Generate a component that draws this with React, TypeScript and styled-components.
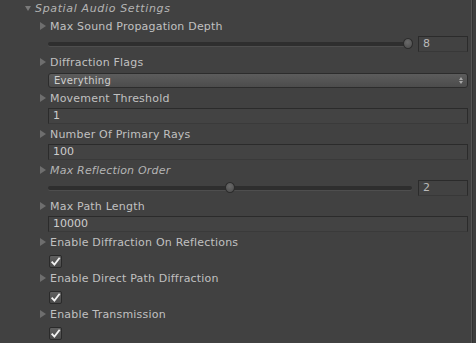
import styled, { createGlobalStyle } from 'styled-components';

const GlobalStyle = createGlobalStyle`
  html, body {
    margin: 0;
    padding: 0;
    background: #414141;
  }
  body {
    font-family: "DejaVu Sans", "Liberation Sans", sans-serif;
    font-size: 11px;
    color: #c2c2c2;
  }
`;

const Window = styled.div`
  display: flex;
  width: 476px;
  height: 343px;
  overflow: hidden;
  background: #414141;
`;

const Inspector = styled.div`
  width: 471px;
  display: flex;
  flex-direction: column;
  margin-top: -1px;
`;

const ScrollEdge = styled.div`
  flex: 1;
  border-left: 1px solid #555555;
  background: #3f3f3f;
  box-shadow: inset 1px 0 0 #333333;
`;

const Row = styled.div<{ $indent: number }>`
  height: 18px;
  display: flex;
  align-items: center;
  padding-left: ${(p) => p.$indent}px;
  padding-right: 3px;
  flex-shrink: 0;
`;

const DownArrow = styled.span`
  width: 0;
  height: 0;
  border-left: 3px solid transparent;
  border-right: 3px solid transparent;
  border-top: 5px solid #7a7a7a;
  margin-right: 4px;
  margin-top: 1px;
`;

const RightArrow = styled.span`
  width: 0;
  height: 0;
  border-top: 4.5px solid transparent;
  border-bottom: 4.5px solid transparent;
  border-left: 6px solid #6e6e6e;
  margin-right: 4px;
`;

const Label = styled.span<{ $italic?: boolean; $spacing?: number }>`
  font-style: ${(p) => (p.$italic ? 'italic' : 'normal')};
  color: ${(p) => (p.$italic ? '#b4b4b4' : '#c0c0c0')};
  letter-spacing: ${(p) => p.$spacing ?? 0.2}px;
  white-space: nowrap;
`;

const SliderWrap = styled.div`
  flex: 1;
  display: flex;
  align-items: center;
`;

const Track = styled.div`
  position: relative;
  flex: 1;
  height: 4px;
  border-radius: 2px;
  background: #2e2e2e;
  box-shadow: 0 1px 0 #4e4e4e;
`;

const Knob = styled.div`
  position: absolute;
  top: -4px;
  width: 10px;
  height: 11px;
  border-radius: 50%;
  background: radial-gradient(circle at 45% 35%, #6a6a6a, #535353 70%);
  border: 1px solid #2c2c2c;
  box-sizing: border-box;
`;

const NumberField = styled.div`
  width: 50px;
  height: 16px;
  margin-left: 6px;
  box-sizing: border-box;
  border: 1px solid #2b2b2b;
  border-bottom-color: #383838;
  background: #424242;
  padding-left: 4px;
  line-height: 14px;
  color: #b9b9b9;
`;

const TextField = styled.div`
  flex: 1;
  height: 16px;
  box-sizing: border-box;
  border: 1px solid #2b2b2b;
  border-bottom-color: #3a3a3a;
  background: #434343;
  padding-left: 4px;
  line-height: 14px;
  color: #cdcdcd;
`;

const Dropdown = styled.div`
  flex: 1;
  height: 15px;
  box-sizing: border-box;
  display: flex;
  align-items: center;
  justify-content: space-between;
  padding: 0 4px 0 5px;
  border: 1px solid #2c2c2c;
  border-radius: 3px;
  background: linear-gradient(#5c5c5c, #4c4c4c);
  font-size: 10px;
  color: #cfcfcf;
  letter-spacing: 0.3px;
`;

const Spinner = styled.span`
  display: flex;
  flex-direction: column;
  gap: 1px;

  &::before,
  &::after {
    content: '';
    width: 0;
    height: 0;
    border-left: 2px solid transparent;
    border-right: 2px solid transparent;
  }
  &::before {
    border-bottom: 3px solid #a8a8a8;
  }
  &::after {
    border-top: 3px solid #a8a8a8;
  }
`;

const CheckBox = styled.div`
  width: 13px;
  height: 13px;
  margin-left: 1px;
  margin-top: 2px;
  box-sizing: border-box;
  border: 1px solid #2a2a2a;
  border-radius: 2px;
  background: linear-gradient(#606060, #4a4a4a);
  display: flex;
  align-items: center;
  justify-content: center;
`;

const Check = () => (
  <svg width="11" height="11" viewBox="0 0 10 10">
    <path d="M1.5 5.2 L4 7.8 L8.8 1.6" fill="none" stroke="#f2f2f2" strokeWidth="1.7" />
  </svg>
);

const Prop = ({ label, italic }: { label: string; italic?: boolean }) => (
  <Row $indent={40}>
    <RightArrow />
    <Label $italic={italic}>{label}</Label>
  </Row>
);

const Slider = ({ pos, value }: { pos: number; value: string }) => (
  <Row $indent={48}>
    <SliderWrap>
      <Track>
        <Knob style={{ left: `calc(${pos * 100}% - ${pos * 8}px - 1px)` }} />
      </Track>
    </SliderWrap>
    <NumberField>{value}</NumberField>
  </Row>
);

const Field = ({ value }: { value: string }) => (
  <Row $indent={48}>
    <TextField>{value}</TextField>
  </Row>
);

const Toggle = () => (
  <Row $indent={48}>
    <CheckBox>
      <Check />
    </CheckBox>
  </Row>
);

export default function App() {
  return (
    <>
      <GlobalStyle />
      <Window>
        <Inspector>
          <Row $indent={25}>
            <DownArrow />
            <Label $italic $spacing={0.65}>
              Spatial Audio Settings
            </Label>
          </Row>
          <Prop label="Max Sound Propagation Depth" />
          <Slider pos={1} value="8" />
          <Prop label="Diffraction Flags" />
          <Row $indent={48}>
            <Dropdown>
              <span>Everything</span>
              <Spinner />
            </Dropdown>
          </Row>
          <Prop label="Movement Threshold" />
          <Field value="1" />
          <Prop label="Number Of Primary Rays" />
          <Field value="100" />
          <Prop label="Max Reflection Order" italic />
          <Slider pos={0.5} value="2" />
          <Prop label="Max Path Length" />
          <Field value="10000" />
          <Prop label="Enable Diffraction On Reflections" />
          <Toggle />
          <Prop label="Enable Direct Path Diffraction" />
          <Toggle />
          <Prop label="Enable Transmission" />
          <Toggle />
        </Inspector>
        <ScrollEdge />
      </Window>
    </>
  );
}
